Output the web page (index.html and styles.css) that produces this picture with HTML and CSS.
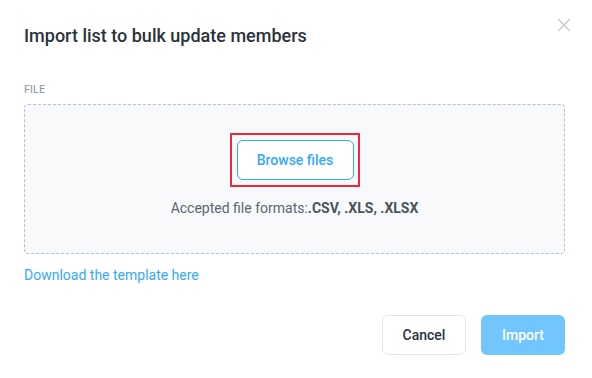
FILE: index.html
```html
<!DOCTYPE html>
<html>
<head>
    <title>Import list</title>
    <link rel="stylesheet" href="styles.css">
</head>
<body>
    <div class="modal">
        <button class="close-btn" aria-label="Close">
            <svg width="14" height="14" viewBox="0 0 14 14">
                <path d="M1 1 L13 13 M13 1 L1 13" stroke="#c9cdd2" stroke-width="1.5" fill="none"/>
            </svg>
        </button>
        <h1 class="modal-title">Import list to bulk update members</h1>

        <div class="field-label">File</div>
        <div class="dropzone">
            <div class="highlight">
                <button class="browse-btn">Browse files</button>
            </div>
            <p class="formats">Accepted file formats:<strong>.CSV, .XLS, .XLSX</strong></p>
        </div>

        <a class="template-link" href="#">Download the template here</a>

        <div class="footer">
            <button class="btn btn-cancel">Cancel</button>
            <button class="btn btn-import" disabled>Import</button>
        </div>
    </div>
</body>
</html>
```

FILE: styles.css
```css
:root {
    --text-dark: #2b323b;
    --text-muted: #5c6571;
    --label: #8b95a1;
    --blue: #36a9f5;
    --blue-light: #72c6fd;
    --border: #e1e5ea;
}

body {
    margin: 0;
    font-family: Roboto, 'Noto Sans', sans-serif;
    background: #fff;
}

.modal {
    position: relative;
    padding: 24px 27px 0 24px;
}

.close-btn {
    position: absolute;
    top: 18px;
    right: 21px;
    padding: 0;
    border: none;
    background: none;
    cursor: pointer;
}

.close-btn svg {
    display: block;
}

.modal-title {
    margin: 0;
    font-size: 18px;
    line-height: 24px;
    font-weight: 500;
    color: var(--text-dark);
}

.field-label {
    margin-top: 35px;
    margin-bottom: 7px;
    font-size: 11px;
    line-height: 14px;
    text-transform: uppercase;
    color: var(--label);
}

.dropzone {
    display: flex;
    flex-direction: column;
    align-items: center;
    height: 150px;
    box-sizing: border-box;
    padding-top: 28px;
    background: #f7f9fb;
    border: 1px dashed #b4c0d3;
    border-radius: 4px;
}

.highlight {
    padding: 5px 4px 5px 5px;
    border: 2px solid #ee2a3c;
}

.browse-btn {
    display: block;
    width: 117px;
    height: 40px;
    border: 1px solid var(--blue);
    border-radius: 6px;
    background: #fff;
    color: var(--blue);
    font-family: inherit;
    font-size: 14px;
    font-weight: 500;
    cursor: pointer;
}

.formats {
    margin: 11px 0 0;
    font-size: 14px;
    line-height: 20px;
    color: var(--text-muted);
}

.formats strong {
    font-weight: 700;
    color: #4a525d;
}

.template-link {
    display: block;
    margin-top: 11px;
    font-size: 14px;
    line-height: 20px;
    color: var(--blue);
    text-decoration: none;
}

.footer {
    display: flex;
    justify-content: flex-end;
    gap: 15px;
    margin-top: 30px;
}

.btn {
    width: 84px;
    height: 40px;
    border-radius: 6px;
    font-family: inherit;
    font-size: 14px;
    font-weight: 500;
    cursor: pointer;
}

.btn-cancel {
    background: #fff;
    border: 1px solid var(--border);
    color: var(--text-dark);
}

.btn-import {
    background: var(--blue-light);
    border: none;
    color: #fff;
}
```
